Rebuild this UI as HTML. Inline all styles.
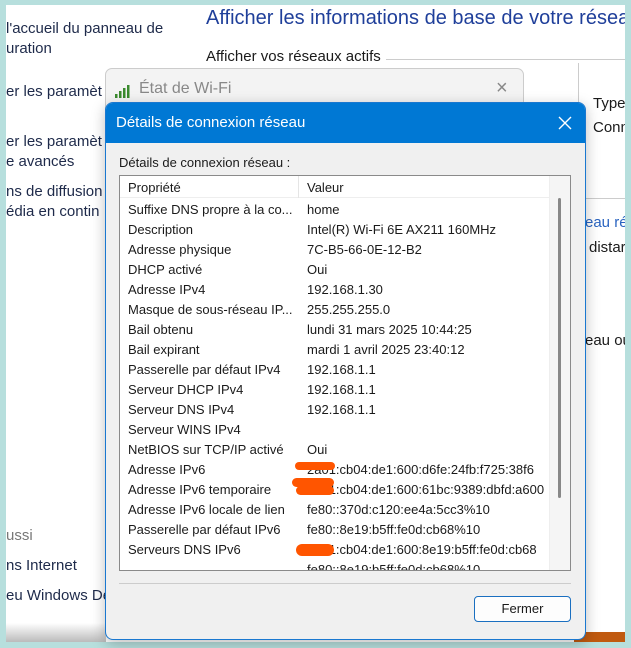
<!DOCTYPE html>
<html><head><meta charset="utf-8"><style>
*{margin:0;padding:0;box-sizing:border-box}
body{width:631px;height:648px;background:#b7dfdd;position:relative;overflow:hidden;font-family:"Liberation Sans",Arial,sans-serif;font-size:13px;color:#1a1a1a}
.page{position:absolute;left:6px;top:5px;width:619px;height:637px;background:#fff;overflow:hidden}
.a{position:absolute;white-space:nowrap}
.nav{color:#1e2a4a;font-size:15px}
.wifi{position:absolute;left:99px;top:63px;width:419px;height:120px;background:#f3f3f3;border:1px solid #ccc;border-radius:7px}
.dlg{position:absolute;left:105px;top:102px;width:481px;height:538px;background:#f0f0f0;border:1px solid #1a78d0;border-radius:8px;overflow:hidden;box-shadow:0 4px 14px rgba(0,0,0,.25)}
.tb{height:40px;background:#0078d4;color:#fff;font-size:15px;padding:11px 0 0 10px;position:relative}
.list{position:absolute;left:13px;top:72px;width:452px;height:396px;background:#fff;border:1px solid #8a8a8a;overflow:hidden}
.row{position:absolute;left:8px;height:20px;line-height:20px;font-size:13px;white-space:nowrap}
.row span{position:absolute;left:179px}
</style></head><body>
<div class="page">
<div class="a" style="left:200px;top:2px;font-size:20px;color:#1f3f9a">Afficher les informations de base de votre réseau</div>
<div class="a nav" style="left:0;top:15px">l'accueil du panneau de</div>
<div class="a nav" style="left:0;top:35px">uration</div>
<div class="a" style="left:200px;top:43px;font-size:15px">Afficher vos réseaux actifs</div>
<div style="position:absolute;left:380px;top:54px;width:239px;height:1px;background:#ccc"></div>
<div class="a nav" style="left:0;top:78px">er les paramèt</div>
<div class="a nav" style="left:0;top:128px">er les paramèt</div>
<div class="a nav" style="left:0;top:148px">e avancés</div>
<div class="a nav" style="left:0;top:178px">ns de diffusion</div>
<div class="a nav" style="left:0;top:198px">édia en contin</div>
<div class="a nav" style="left:0;top:522px;color:#777">ussi</div>
<div class="a nav" style="left:0;top:552px">ns Internet</div>
<div class="a nav" style="left:0;top:582px">eu Windows De</div>
<div style="position:absolute;left:0;top:618px;width:100px;height:19px;background:linear-gradient(#fff,#bbb)"></div>
<div style="position:absolute;left:568px;top:627px;width:51px;height:10px;background:#c05a10"></div>
<div style="position:absolute;left:572px;top:58px;width:1px;height:60px;background:#ccc"></div>
<div class="a" style="left:587px;top:90px;font-size:15px">Type</div>
<div class="a" style="left:587px;top:114px;font-size:15px">Conn</div>
<div style="position:absolute;left:579px;top:193px;width:40px;height:1px;background:#ccc"></div>
<div class="a" style="left:579px;top:209px;font-size:15px;color:#2a64c0">eau rés</div>
<div class="a" style="left:583px;top:234px;font-size:15px">distar</div>
<div class="a" style="left:579px;top:327px;font-size:15px">eau ou</div>
<div class="wifi">
<svg style="position:absolute;left:8px;top:15px" width="18" height="14"><rect x="1" y="10" width="2.5" height="4" fill="#3a8a2e"/><rect x="5" y="7" width="2.5" height="7" fill="#3a8a2e"/><rect x="9" y="4" width="2.5" height="10" fill="#3a8a2e"/><rect x="13" y="1" width="2.5" height="13" fill="#3a8a2e"/></svg>
<div class="a" style="left:33px;top:11px;font-size:16px;color:#888">État de Wi-Fi</div>
<div class="a" style="left:390px;top:8px;font-size:20px;color:#888">×</div>
</div>
</div>
<div class="dlg">
<div class="tb">Détails de connexion réseau
<svg style="position:absolute;left:452px;top:13px" width="14" height="14"><path d="M1 1L13 13M13 1L1 13" stroke="#fff" stroke-width="1.4"/></svg></div>
<div class="a" style="left:13px;top:52px;font-size:13px">Détails de connexion réseau :</div>
<div class="list">
<div style="position:absolute;left:0;top:0;width:430px;height:22px;border-bottom:1px solid #eee"></div>
<div style="position:absolute;left:178px;top:0;width:1px;height:22px;background:#e5e5e5"></div>
<div class="row" style="top:2px">Propriété<span>Valeur</span></div>
<div class="row" style="top:24px">Suffixe DNS propre à la co...<span>home</span></div>
<div class="row" style="top:44px">Description<span>Intel(R) Wi-Fi 6E AX211 160MHz</span></div>
<div class="row" style="top:64px">Adresse physique<span>7C-B5-66-0E-12-B2</span></div>
<div class="row" style="top:84px">DHCP activé<span>Oui</span></div>
<div class="row" style="top:104px">Adresse IPv4<span>192.168.1.30</span></div>
<div class="row" style="top:124px">Masque de sous-réseau IP...<span>255.255.255.0</span></div>
<div class="row" style="top:144px">Bail obtenu<span>lundi 31 mars 2025 10:44:25</span></div>
<div class="row" style="top:164px">Bail expirant<span>mardi 1 avril 2025 23:40:12</span></div>
<div class="row" style="top:184px">Passerelle par défaut IPv4<span>192.168.1.1</span></div>
<div class="row" style="top:204px">Serveur DHCP IPv4<span>192.168.1.1</span></div>
<div class="row" style="top:224px">Serveur DNS IPv4<span>192.168.1.1</span></div>
<div class="row" style="top:244px">Serveur WINS IPv4</div>
<div class="row" style="top:264px">NetBIOS sur TCP/IP activé<span>Oui</span></div>
<div class="row" style="top:284px">Adresse IPv6<span>2a01:cb04:de1:600:d6fe:24fb:f725:38f6</span></div>
<div class="row" style="top:304px">Adresse IPv6 temporaire<span>2a01:cb04:de1:600:61bc:9389:dbfd:a600</span></div>
<div class="row" style="top:324px">Adresse IPv6 locale de lien<span>fe80::370d:c120:ee4a:5cc3%10</span></div>
<div class="row" style="top:344px">Passerelle par défaut IPv6<span>fe80::8e19:b5ff:fe0d:cb68%10</span></div>
<div class="row" style="top:364px">Serveurs DNS IPv6<span>2a01:cb04:de1:600:8e19:b5ff:fe0d:cb68</span></div>
<div class="row" style="top:384px"><span>fe80::8e19:b5ff:fe0d:cb68%10</span></div>
<div style="position:absolute;left:175px;top:286px;width:40px;height:8px;background:#ff5500;border-radius:4px"></div>
<div style="position:absolute;left:172px;top:302px;width:42px;height:9px;background:#ff5500;border-radius:5px"></div>
<div style="position:absolute;left:176px;top:310px;width:38px;height:9px;background:#ff5500;border-radius:5px"></div>
<div style="position:absolute;left:176px;top:368px;width:38px;height:12px;background:#ff5500;border-radius:6px"></div>
<div style="position:absolute;left:429px;top:0;width:21px;height:396px;background:#f5f5f5;border-left:1px solid #eee"></div>
<div style="position:absolute;left:438px;top:22px;width:3px;height:300px;background:#888;border-radius:2px"></div>
</div>
<div style="position:absolute;left:13px;top:480px;width:452px;height:1px;background:#ccc"></div>
<div style="position:absolute;left:368px;top:493px;width:97px;height:26px;background:#fdfdfd;border:1px solid #1a6fc0;border-radius:4px;text-align:center;line-height:24px;font-size:13px">Fermer</div>
</div>
</body></html>
